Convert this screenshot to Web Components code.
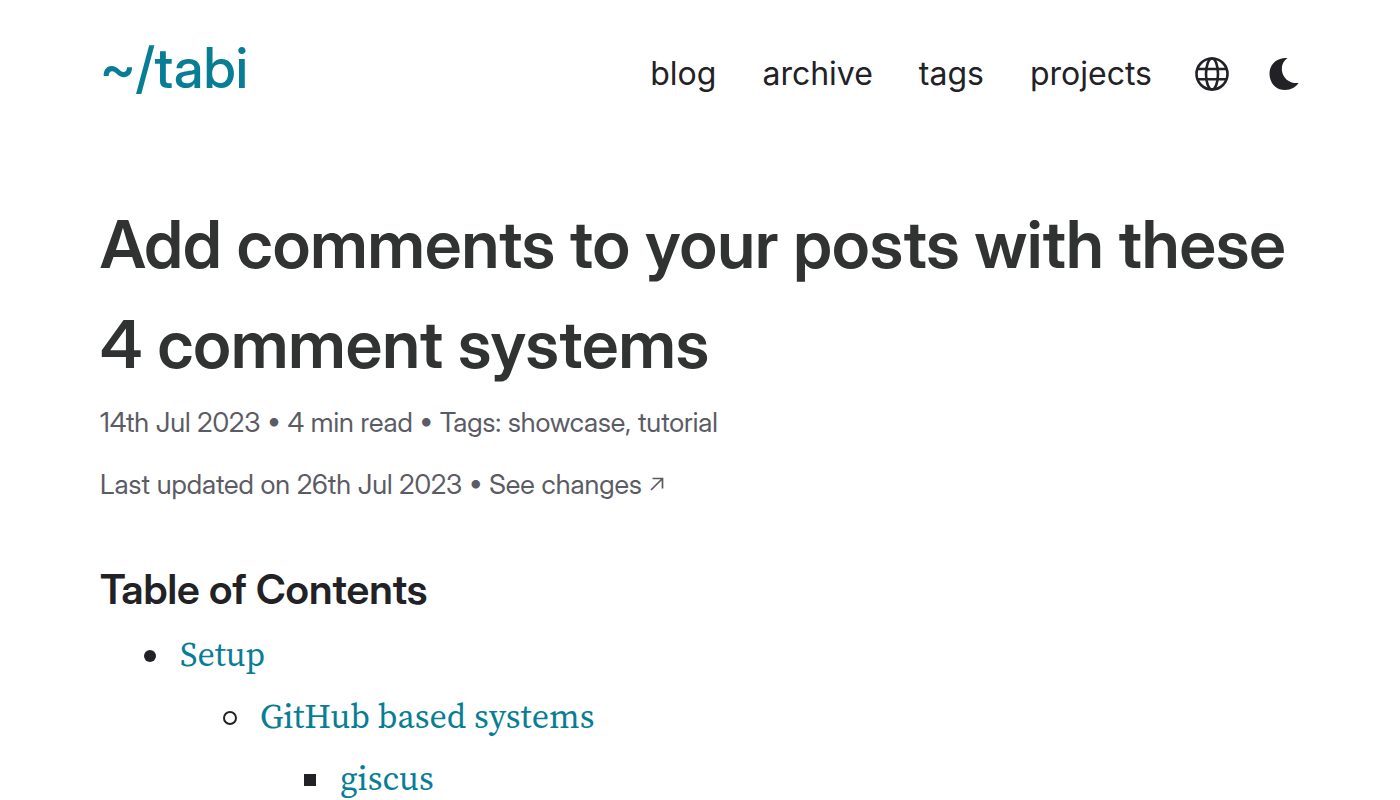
<!DOCTYPE html>
<html lang="en">
<head>
<meta charset="utf-8">
<meta name="viewport" content="width=device-width, initial-scale=1">
<title>Add comments to your posts with these 4 comment systems</title>
<style>
  :root { --primary: #087e96; --text: #222226; --heading: #313333; --meta: #5b5b65; }
  body { margin: 0; background: #fff; color: var(--text); font-family: "Inter Display", Inter, "Liberation Sans", sans-serif; overflow-x: hidden; }
</style>
</head>
<body>
<blog-page>
  <site-header slot="header">
    <nav-link href="#blog">blog</nav-link>
    <nav-link href="#archive">archive</nav-link>
    <nav-link href="#tags">tags</nav-link>
    <nav-link href="#projects">projects</nav-link>
  </site-header>
  <post-heading>Add comments to your posts with these 4 comment systems</post-heading>
  <post-meta></post-meta>
  <table-of-contents></table-of-contents>
</blog-page>
<script>
const define = (name, html) => {
  const template = document.createElement('template');
  template.innerHTML = html;
  customElements.define(name, class extends HTMLElement {
    constructor() {
      super();
      this.attachShadow({ mode: 'open' }).append(template.content.cloneNode(true));
    }
  });
};

define('blog-page', `
  <style>
    :host { display: block; max-width: 1200px; margin: 0 auto; padding: 0 100px; box-sizing: content-box; }
  </style>
  <slot name="header"></slot>
  <main><slot></slot></main>`);

define('site-header', `
  <style>
    :host { display: block; padding-top: 24px; }
    header { display: flex; justify-content: space-between; align-items: center; }
    .logo { color: var(--primary); font-size: 56px; line-height: 88px; font-weight: 500; text-decoration: none; }
    nav { display: flex; align-items: center; gap: 46px; padding-top: 12px; }
    .icons { display: flex; align-items: center; gap: 34px; margin: 0 -3px 0 -5px; }
    button { display: block; padding: 0; border: 0; background: none; color: inherit; cursor: pointer; }
    svg { display: block; width: 38px; height: 38px; }
  </style>
  <header>
    <a class="logo" href="#home">~/tabi</a>
    <nav aria-label="Main">
      <slot></slot>
      <div class="icons">
        <button type="button" aria-label="Language">
          <svg viewBox="0 0 38 38" fill="none" stroke="currentColor" stroke-width="2.6">
            <circle cx="19" cy="19" r="15.5"/><ellipse cx="19" cy="19" rx="6" ry="15.5"/><path d="M4.5 14h29M4.5 24.300h29"/>
          </svg>
        </button>
        <button type="button" aria-label="Toggle dark mode">
          <svg viewBox="0 0 38 38" fill="currentColor">
            <path d="M22.500 3C12 2 4.500 9.500 4.500 18.500C4.500 28 11 35 20 35C26 35 31 32 33.500 28C25 29 18 23.500 17 16C16.300 10.500 18 6 22.500 3Z"/>
          </svg>
        </button>
      </div>
    </nav>
  </header>`);

customElements.define('nav-link', class extends HTMLElement {
  constructor() {
    super();
    this.attachShadow({ mode: 'open' }).innerHTML = `
      <style>
        :host { display: block; }
        a { color: inherit; text-decoration: none; font: 400 32px/56px Inter, "Liberation Sans", sans-serif; }
      </style>
      <a><slot></slot></a>`;
    this.shadowRoot.querySelector('a').href = this.getAttribute('href');
  }
});

define('post-heading', `
  <style>
    :host { display: block; padding-top: 82px; }
    h1 { margin: 0; color: var(--heading); font-size: 66px; line-height: 100px; font-weight: 600; }
  </style>
  <h1><slot></slot></h1>`);

define('post-meta', `
  <style>
    :host { display: block; color: var(--meta); font-size: 27px; line-height: 62px; font-weight: 400; margin-top: -2px; }
    ul { display: flex; flex-wrap: wrap; margin: 0; padding: 0; list-style: none; white-space: pre; }
    a { color: inherit; text-decoration: none; }
    svg { width: 14px; height: 14px; margin: 0 0 3px 8px; }
  </style>
  <ul><li>14th Jul 2023</li><li> • 4 min read</li><li> • Tags: <a href="#showcase">showcase</a>, <a href="#tutorial">tutorial</a></li></ul>
  <ul><li>Last updated on 26th Jul 2023</li><li> • <a href="#changes">See changes<svg viewBox="0 0 14 14" fill="none" stroke="currentColor" stroke-width="1.700"><path d="M1 13L12.500 1.500M2.500 1.500H12.500V11.500"/></svg></a></li></ul>`);

define('table-of-contents', `
  <style>
    :host { display: block; padding-top: 39px; }
    h2 { margin: 0; font-size: 41px; line-height: 68px; font-weight: 600; }
    ul { margin: 0; padding-left: 80px; list-style: none; font: 34px/62px "Source Serif 4", "Source Serif Pro", "Liberation Serif", serif; }
    .row { display: flex; align-items: center; gap: 24px; margin-left: -36px; }
    .row::before { content: ""; box-sizing: border-box; width: 12px; height: 12px; margin-top: 4px; border-radius: 50%; background: currentColor; }
    .ring::before { width: 14px; height: 14px; margin: 4px -1px 0; background: none; border: 2px solid currentColor; }
    .square::before { border-radius: 0; }
    a { color: var(--primary); text-decoration: none; }
  </style>
  <h2 id="toc">Table of Contents</h2>
  <nav aria-labelledby="toc">
    <ul><li><div class="row"><a href="#setup">Setup</a></div>
      <ul><li><div class="row ring"><a href="#github">GitHub based systems</a></div>
        <ul><li><div class="row square"><a href="#giscus">giscus</a></div></li></ul>
      </li></ul>
    </li></ul>
  </nav>`);
</script>
</body>
</html>
